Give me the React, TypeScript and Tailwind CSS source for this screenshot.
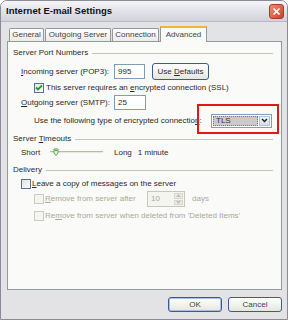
import React from "react";

function U({ c }: { c: string }) {
  return <span className="underline underline-offset-[1px]">{c}</span>;
}

function Group({ label }: { label: React.ReactNode }) {
  return (
    <div className="flex items-center h-[10px] pl-[5px] pr-[8px]">
      <span className="whitespace-nowrap">{label}</span>
      <div className="flex-1 h-px bg-[#c4c4bc] ml-[4px]" />
    </div>
  );
}

function Check({ checked, disabled }: { checked?: boolean; disabled?: boolean }) {
  return (
    <div
      className={
        disabled
          ? "w-[10px] h-[10px] border border-[#cdcbc0] bg-[#f4f4f0] shrink-0"
          : "w-[10px] h-[10px] border border-[#5a7394] bg-gradient-to-br from-[#e2e2dc] to-white shrink-0 flex items-center justify-center"
      }
    >
      {checked && (
        <svg width="8" height="8" viewBox="0 0 8 8">
          <path d="M1 3.5 L3 5.5 L7 1.5" stroke="#21a121" strokeWidth="1.8" fill="none" />
        </svg>
      )}
    </div>
  );
}

function Tab({ label, w, selected }: { label: string; w: string; selected?: boolean }) {
  return selected ? (
    <div
      className={`${w} h-[16px] -mb-px relative z-10 bg-[#fafaf8] border-x border-[#919b9c] border-t-2 border-t-[#f0b63a] flex items-center justify-center`}
    >
      {label}
    </div>
  ) : (
    <div
      className={`${w} h-[13px] bg-gradient-to-b from-white to-[#ecebe5] border-x border-t border-[#919b9c] rounded-t-[2px] flex items-center justify-center`}
    >
      {label}
    </div>
  );
}

function Btn({ children, w, def }: { children: React.ReactNode; w: string; def?: boolean }) {
  return (
    <div
      className={`${w} h-[15px] rounded-[3px] border border-[#3c5c8c] bg-gradient-to-b from-white to-[#e6e6e0] flex items-center justify-center text-[#444] ${
        def ? "shadow-[inset_0_0_0_1px_#a8c0e8]" : ""
      }`}
    >
      {children}
    </div>
  );
}

export default function App() {
  return (
    <div className="w-[288px] h-[320px] flex flex-col border border-[#8b8b98] rounded-t-[7px] bg-[#e3e3e6] overflow-hidden font-['Liberation_Sans',Arial,sans-serif] text-[8px] leading-none text-[#2a2a2a]">
      {/* Title bar */}
      <div className="h-[21px] shrink-0 flex items-center justify-between pl-[5px] pr-[3px] bg-gradient-to-b from-[#f6f6fa] via-[#e2e2ea] to-[#d2d2dc] border-b border-[#b8b8c4]">
        <span className="font-bold text-[9.5px] text-[#111]">Internet E-mail Settings</span>
        <div className="w-[15px] h-[15px] rounded-[3px] border border-[#a83c2c] bg-gradient-to-br from-[#f08a70] to-[#c8422c] flex items-center justify-center">
          <svg width="9" height="9" viewBox="0 0 9 9">
            <path d="M1.5 1.5 L7.5 7.5 M7.5 1.5 L1.5 7.5" stroke="white" strokeWidth="1.7" />
          </svg>
        </div>
      </div>

      {/* Body */}
      <div className="flex-1 flex flex-col pl-[6px] pr-[5px] pt-[4px]">
        <div className="h-[15px] flex items-end pl-[2px] gap-[1px] text-[#444]">
          <Tab label="General" w="w-[35px]" />
          <Tab label="Outgoing Server" w="w-[66px]" />
          <Tab label="Connection" w="w-[47px]" />
          <Tab label="Advanced" w="w-[47px]" selected />
        </div>

        {/* Panel */}
        <div className="relative h-[249px] border border-[#919b9c] bg-[#fafaf8] flex flex-col pt-[6px]">
          <Group label="Server Port Numbers" />

          <div className="mt-[5px] h-[17px] flex items-center pl-[13px]">
            <span className="w-[93px] shrink-0">
              <U c="I" />ncoming server (POP3):
            </span>
            <div className="w-[31px] h-[15px] border border-[#7f9db9] bg-white flex items-center pl-[3px]">995</div>
            <div className="ml-[7px] w-[57px] h-[17px] rounded-[3px] border border-[#3c5c8c] bg-gradient-to-b from-white to-[#e6e6e0] flex items-center justify-center">
              Use&nbsp;<U c="D" />efaults
            </div>
          </div>

          <div className="mt-[3px] h-[10px] flex items-center pl-[26px]">
            <Check checked />
            <span className="ml-[2px]">
              This server requires an <U c="e" />ncrypted connection (SSL)
            </span>
          </div>

          <div className="mt-[2px] h-[15px] flex items-center pl-[13px]">
            <span className="w-[93px] shrink-0">
              <U c="O" />utgoing server (SMTP):
            </span>
            <div className="w-[32px] h-[15px] border border-[#7f9db9] bg-white flex items-center pl-[3px]">25</div>
          </div>

          <div className="mt-[3px] h-[15px] flex items-center pl-[26px]">
            <span className="w-[177px] shrink-0">
              Use the following type of encrypted connectio<U c="n" />:
            </span>
            <div className="w-[61px] h-[14px] border border-[#7f9db9] bg-white flex items-stretch p-[1px]">
              <div className="flex-1 bg-[#cacaca] border border-dotted border-[#777] flex items-center pl-[2px] text-[#333]">
                TLS
              </div>
              <div className="w-[11px] ml-[1px] bg-gradient-to-b from-[#f4f6fc] to-[#d6dcec] border border-[#b4c0d8] flex items-center justify-center">
                <svg width="7" height="5" viewBox="0 0 7 5">
                  <path d="M1 1 L3.5 3.5 L6 1" stroke="#222" strokeWidth="1.5" fill="none" />
                </svg>
              </div>
            </div>
          </div>

          <div className="mt-[6px]">
            <Group
              label={
                <>
                  Server <U c="T" />imeouts
                </>
              }
            />
          </div>

          <div className="mt-[4px] h-[10px] flex items-center pl-[13px]">
            <span className="w-[27px] shrink-0">Short</span>
            <svg width="56" height="10" viewBox="0 0 56 10" className="shrink-0">
              <line x1="2" y1="3.5" x2="55" y2="3.5" stroke="#b8b8b0" strokeWidth="1" />
              <line x1="2" y1="4.5" x2="55" y2="4.5" stroke="#e8e8e0" strokeWidth="1" />
              <path d="M6 1 L10 1 L10 5 L8 7.5 L6 5 Z" fill="#e8f4e0" stroke="#5aa04a" strokeWidth="1" />
              <line x1="7" y1="2.5" x2="9" y2="2.5" stroke="#34a834" strokeWidth="1.2" />
            </svg>
            <span className="ml-[10px]">Long</span>
            <span className="ml-[6px]">1 minute</span>
          </div>

          <div className="mt-[7px]">
            <Group label="Delivery" />
          </div>

          <div className="mt-[4px] h-[10px] flex items-center pl-[13px]">
            <Check />
            <span className="ml-[1px]">
              <U c="L" />eave a copy of messages on the server
            </span>
          </div>

          <div className="mt-[2px] h-[16px] flex items-center pl-[26px] text-[#aca899]">
            <Check disabled />
            <span className="ml-[1px] w-[102px] shrink-0">
              <U c="R" />emove from server after
            </span>
            <div className="w-[38px] h-[16px] border border-[#c9c7ba] bg-[#f4f4f0] flex items-stretch">
              <div className="flex-1 flex items-center pl-[3px]">10</div>
              <div className="w-[11px] flex flex-col gap-px p-px">
                <div className="flex-1 bg-[#ecece6] border border-[#d8d8d0] flex items-center justify-center">
                  <svg width="5" height="3" viewBox="0 0 5 3"><path d="M0 3 L2.5 0 L5 3 Z" fill="#c0c0b8" /></svg>
                </div>
                <div className="flex-1 bg-[#ecece6] border border-[#d8d8d0] flex items-center justify-center">
                  <svg width="5" height="3" viewBox="0 0 5 3"><path d="M0 0 L2.5 3 L5 0 Z" fill="#c0c0b8" /></svg>
                </div>
              </div>
            </div>
            <span className="ml-[7px]">days</span>
          </div>

          <div className="mt-[4px] h-[10px] flex items-center pl-[26px] text-[#aca899]">
            <Check disabled />
            <span className="ml-[1px]">
              Re<U c="m" />ove from server when deleted from 'Deleted Items'
            </span>
          </div>

          {/* Red annotation box */}
          <div className="absolute left-[189px] top-[62px] w-[82px] h-[30px] border-2 border-[#e01818]" />
        </div>

        <div className="mt-[7px] flex justify-end gap-[6px]">
          <Btn w="w-[54px]" def>
            OK
          </Btn>
          <Btn w="w-[54px]">Cancel</Btn>
        </div>
      </div>
    </div>
  );
}
